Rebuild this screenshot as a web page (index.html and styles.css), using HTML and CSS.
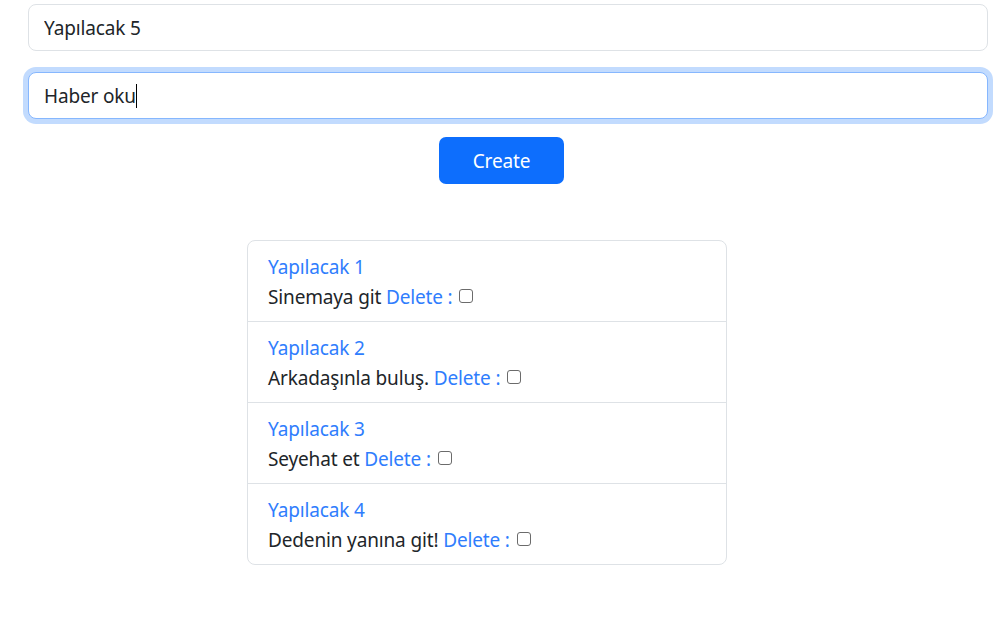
FILE: index.html
```html
<!DOCTYPE html>
<html lang="tr">
<head>
<meta charset="utf-8">
<title>Yapılacaklar</title>
<link rel="stylesheet" href="styles.css">
</head>
<body>
<main class="page">
  <form class="todo-form">
    <input class="field" type="text" value="Yapılacak 5">
    <div class="field field-focused" role="textbox">Haber oku<span class="caret"></span></div>
    <div class="actions">
      <button type="button" class="btn-create">Create</button>
    </div>
  </form>
  <ul class="todo-list">
    <li class="todo-item">
      <a class="todo-title" href="#">Yapılacak 1</a>
      <div class="todo-line">Sinemaya git <a class="todo-delete" href="#">Delete :</a> <input type="checkbox" class="todo-check"></div>
    </li>
    <li class="todo-item">
      <a class="todo-title" href="#">Yapılacak 2</a>
      <div class="todo-line">Arkadaşınla buluş. <a class="todo-delete" href="#">Delete :</a> <input type="checkbox" class="todo-check"></div>
    </li>
    <li class="todo-item">
      <a class="todo-title" href="#">Yapılacak 3</a>
      <div class="todo-line">Seyehat et <a class="todo-delete" href="#">Delete :</a> <input type="checkbox" class="todo-check"></div>
    </li>
    <li class="todo-item">
      <a class="todo-title" href="#">Yapılacak 4</a>
      <div class="todo-line">Dedenin yanına git! <a class="todo-delete" href="#">Delete :</a> <input type="checkbox" class="todo-check"></div>
    </li>
  </ul>
</main>
</body>
</html>
```
FILE: styles.css
```css
* { box-sizing: border-box; }
html, body { margin: 0; padding: 0; background: #fff; }
body {
  font-family: "Noto Sans", "Open Sans", sans-serif;
  font-size: 19px;
  letter-spacing: -0.15px;
  color: #212529;
  line-height: 1.5;
}
.page { padding-top: 4px; }
.todo-form {
  width: 960px;
  margin-left: 28px;
  display: flex;
  flex-direction: column;
}
.field {
  display: block;
  width: 100%;
  height: 47px;
  padding: 1px 15px 0;
  font: inherit;
  letter-spacing: inherit;
  color: #212529;
  background: #fff;
  border: 1px solid #dee2e6;
  border-radius: 8px;
  outline: none;
  line-height: 44px;
}
.field-focused {
  margin-top: 21px;
  border-color: #86b7fe;
  box-shadow: 0 0 0 5px rgba(13, 110, 253, 0.25);
}
.caret {
  display: inline-block;
  width: 1px;
  height: 24px;
  background: #000;
  vertical-align: -5px;
}
.actions {
  margin-top: 18px;
  padding-left: 411px;
}
.btn-create {
  width: 125px;
  height: 47px;
  padding: 1px 0 0;
  border: 0;
  border-radius: 7px;
  background: #0d6efd;
  color: #fff;
  font: inherit;
  letter-spacing: inherit;
  cursor: pointer;
}
.todo-list {
  list-style: none;
  margin: 56px 0 0 247px;
  padding: 0;
  width: 480px;
  border: 1px solid #dee2e6;
  border-radius: 8px;
}
.todo-item {
  padding: 11px 20px 9px;
  border-top: 1px solid #dee2e6;
  line-height: 30px;
}
.todo-item:first-child { border-top: 0; }
.todo-title, .todo-delete {
  color: #2f7dfd;
  text-decoration: none;
}
.todo-title { display: block; }
.todo-check {
  appearance: none;
  -webkit-appearance: none;
  width: 14px;
  height: 14px;
  margin: 0 0 0 2px;
  border: 1px solid #6b6b6b;
  border-radius: 3px;
  background: #fff;
  vertical-align: 1px;
}
```
